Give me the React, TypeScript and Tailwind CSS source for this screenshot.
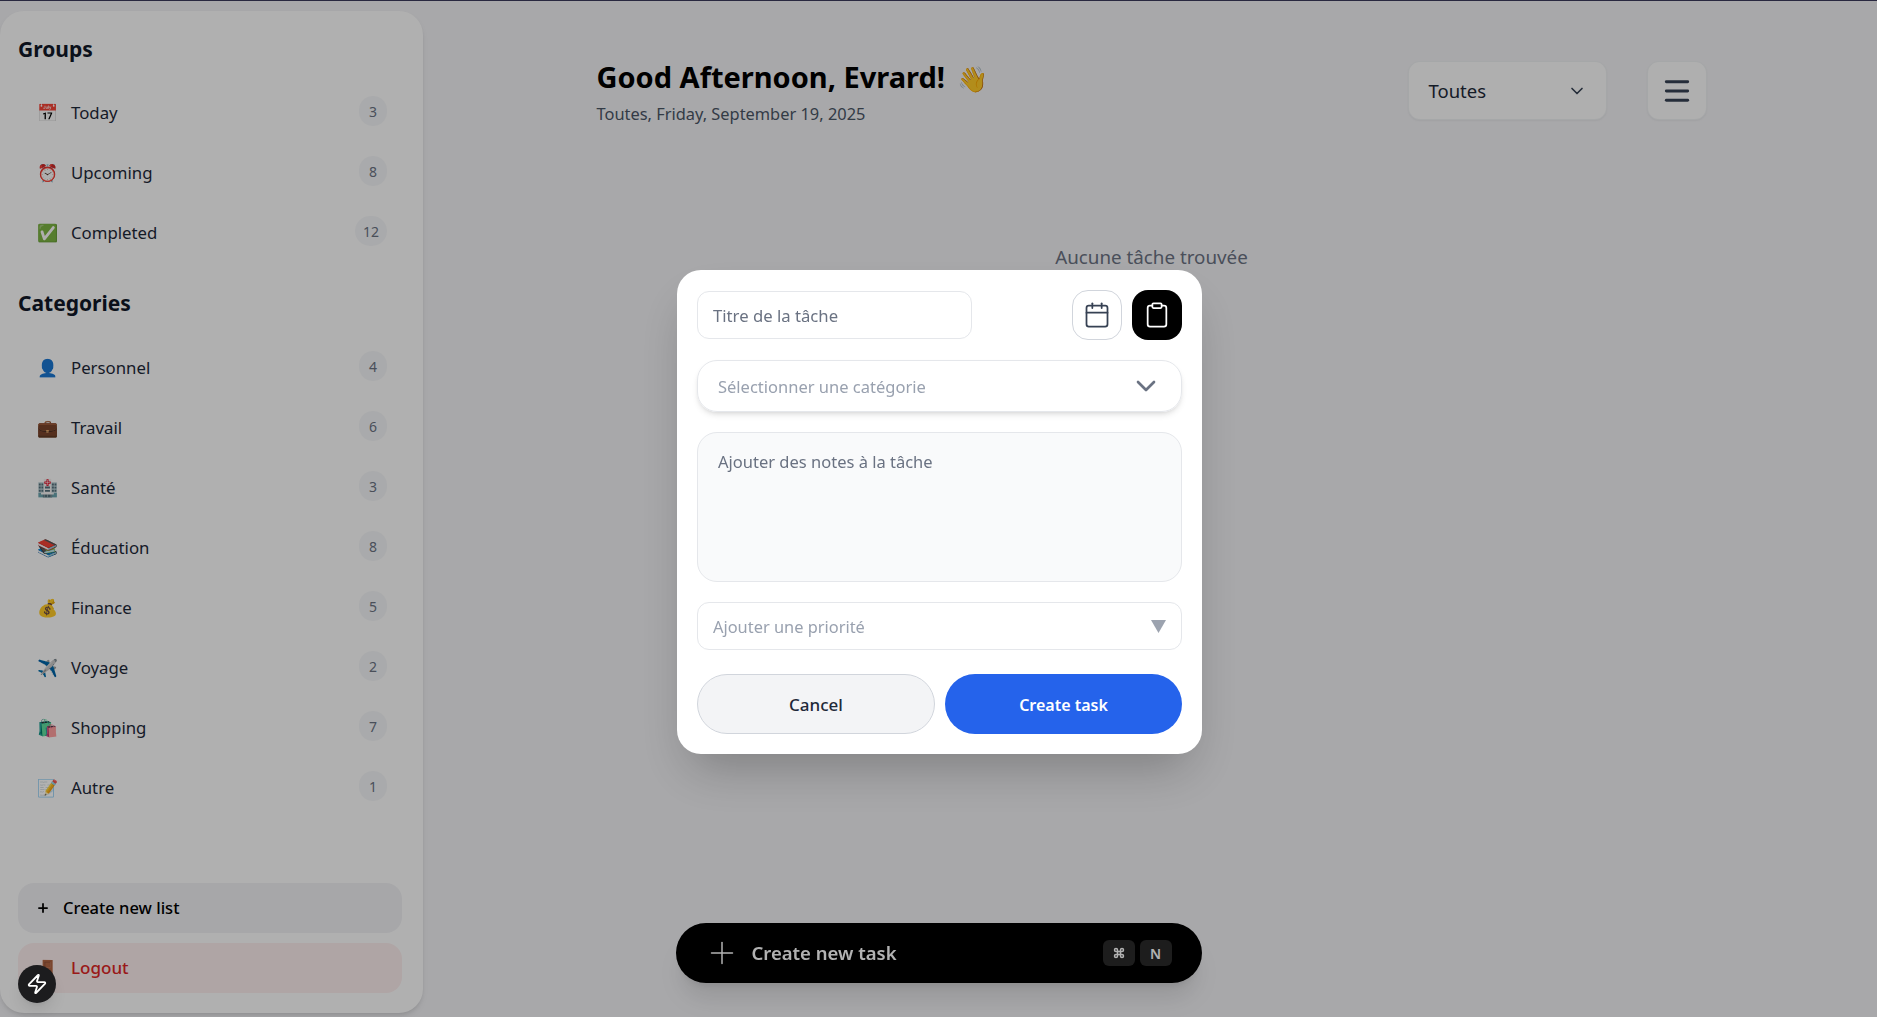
import { Calendar, ChevronDown, Clipboard, Command, Menu, Plus, Zap } from "lucide-react";

const groups = [
  { name: "Today", count: 3, icon: "📅" },
  { name: "Upcoming", count: 8, icon: "⏰" },
  { name: "Completed", count: 12, icon: "✅" },
];

const categories = [
  { name: "Personnel", count: 4, icon: "👤" },
  { name: "Travail", count: 6, icon: "💼" },
  { name: "Santé", count: 3, icon: "🏥" },
  { name: "Éducation", count: 8, icon: "📚" },
  { name: "Finance", count: 5, icon: "💰" },
  { name: "Voyage", count: 2, icon: "✈️" },
  { name: "Shopping", count: 7, icon: "🛍️" },
  { name: "Autre", count: 1, icon: "📝" },
];

function Row({ name, count, icon }: { name: string; count: number; icon: string }) {
  return (
    <div className="flex h-[60px] items-center pl-[19px] pr-[15px]">
      <span className="mr-[14px] flex w-5 justify-center text-[17px] leading-none">{icon}</span>
      <span className="flex-1 pt-[2px] text-[16.8px] text-gray-800">{name}</span>
      <span className="mb-[2px] flex h-[30px] min-w-[28px] items-center justify-center rounded-full bg-gray-100 px-2 text-[14px] text-gray-500">
        {count}
      </span>
    </div>
  );
}

export default function App() {
  return (
    <div className="flex h-screen overflow-hidden border-t border-[#3c3a5c] bg-[#f1f1f4] font-['Noto_Sans',sans-serif]">
      <aside className="mt-[10px] mb-1 flex w-[423px] shrink-0 flex-col rounded-3xl bg-[#fcfcfc] pt-[22px] pr-[21px] pb-5 pl-[18px] shadow-md">
        <h2 className="mb-[17px] text-[21px] leading-8 font-bold text-gray-900">Groups</h2>
        {groups.map((g) => (
          <Row key={g.name} {...g} />
        ))}
        <h2 className="mt-[25px] mb-[18px] text-[21px] leading-8 font-bold text-gray-900">Categories</h2>
        {categories.map((c) => (
          <Row key={c.name} {...c} />
        ))}
        <div className="mt-auto flex h-[50px] items-center rounded-2xl bg-[#f0f0f3] pl-[18px] text-[16.500px] font-medium text-black">
          <Plus className="mr-[13px] h-3.5 w-3.5" strokeWidth={3} />
          Create new list
        </div>
        <div className="mt-[10px] flex h-[50px] items-center rounded-2xl bg-[#fbecec] pl-[19px] text-[17px] font-medium text-[#dc2626]">
          <span className="mr-[14px] flex w-5 justify-center text-[17px] leading-none">🚪</span>
          Logout
        </div>
      </aside>

      <main className="relative flex-1 pl-[3px]">
        <div className="mx-auto flex w-[1110px] items-start justify-between pt-[60px]">
          <div>
            <h1 className="text-[29px] leading-8 font-bold text-black">
              Good Afternoon, Evrard! <span className="ml-1 text-[25px]">👋</span>
            </h1>
            <p className="mt-2 text-[16.400px] text-gray-600">Toutes, Friday, September 19, 2025</p>
          </div>
          <div className="flex gap-10">
            <div className="flex h-[59px] w-[199px] items-center justify-between rounded-xl border border-gray-200/60 bg-[#fbfbfb] pr-[19px] pl-5 text-[18.500px] text-gray-800 shadow-xs">
              Toutes
              <ChevronDown className="h-5 w-5 text-gray-700" />
            </div>
            <div className="flex h-[59px] w-[60px] items-center justify-center rounded-xl border border-gray-200/60 bg-[#fbfbfb] text-gray-700 shadow-xs">
              <Menu className="h-8 w-8" strokeWidth={2.200} />
            </div>
          </div>
        </div>
        <p className="mt-[116px] text-center text-[18.800px] text-gray-500">Aucune tâche trouvée</p>
      </main>

      {/* bottom bar */}
      <div className="fixed bottom-[34px] left-1/2 flex h-[60px] w-[526px] -translate-x-1/2 items-center rounded-full bg-black pr-[30px] pl-[28px] text-white shadow-xl">
        <Plus className="mr-[12px] h-9 w-9" strokeWidth={1} />
        <span className="flex-1 text-[18.500px] font-semibold">Create new task</span>
        <span className="flex h-[26px] w-8 items-center justify-center rounded-md bg-[#2a2a2a]">
          <Command className="h-3 w-3" strokeWidth={3} />
        </span>
        <span className="ml-[5px] flex h-[26px] w-8 items-center justify-center rounded-md bg-[#2a2a2a] text-[14px] font-semibold">N</span>
      </div>

      {/* modal */}
      <div className="fixed inset-0 flex items-center justify-center bg-black/30 pt-[7px] pl-[2px]">
        <div className="w-[525px] rounded-3xl bg-white p-5 shadow-2xl">
          <div className="flex items-center justify-between">
            <div className="flex h-[48px] w-[275px] items-center rounded-xl border border-gray-200 pt-[2px] pl-[15px] text-[16.700px] text-gray-500">
              Titre de la tâche
            </div>
            <div className="flex gap-[10px]">
              <div className="flex h-[50px] w-[50px] items-center justify-center rounded-2xl border border-gray-300 text-gray-700">
                <Calendar className="h-7 w-7" strokeWidth={1.500} />
              </div>
              <div className="flex h-[50px] w-[50px] items-center justify-center rounded-2xl bg-black text-white">
                <Clipboard className="h-7 w-7" strokeWidth={1.500} />
              </div>
            </div>
          </div>
          <div className="mt-5 flex h-[52px] items-center justify-between rounded-[20px] border border-gray-200 pr-[19px] pl-5 text-[16.500px] text-gray-400 shadow-md">
            <span className="pt-[3px]">Sélectionner une catégorie</span>
            <ChevronDown className="h-8 w-8 text-gray-500" strokeWidth={2} />
          </div>
          <div className="mt-5 h-[150px] rounded-[20px] border border-gray-200 bg-gray-50 px-5 pt-[17px] text-[16.500px] text-gray-500">
            Ajouter des notes à la tâche
          </div>
          <div className="mt-5 flex h-[48px] items-center justify-between rounded-xl border border-gray-200 px-[15px] text-[16.400px] text-gray-400">
            <span className="pt-[2px]">Ajouter une priorité</span>
            <svg viewBox="0 0 15 13" className="h-[13px] w-[15px]">
              <path d="M0 0h15L7.500 13Z" fill="#9ca3af" />
            </svg>
          </div>
          <div className="mt-6 flex gap-[10px]">
            <button className="h-[60px] w-[238px] rounded-full border border-gray-300 bg-gray-100 pt-[2px] text-[17px] font-medium text-gray-800">Cancel</button>
            <button className="h-[60px] flex-1 rounded-full bg-[#2563eb] pt-[2px] text-[16px] font-semibold text-white">Create task</button>
          </div>
        </div>
      </div>

      {/* dev indicator */}
      <div className="fixed bottom-[14px] left-[18px] flex h-[38px] w-[38px] items-center justify-center rounded-full bg-[#1c1c1e] text-white shadow-lg">
        <Zap className="h-[22px] w-[22px]" strokeWidth={2} />
      </div>
    </div>
  );
}
